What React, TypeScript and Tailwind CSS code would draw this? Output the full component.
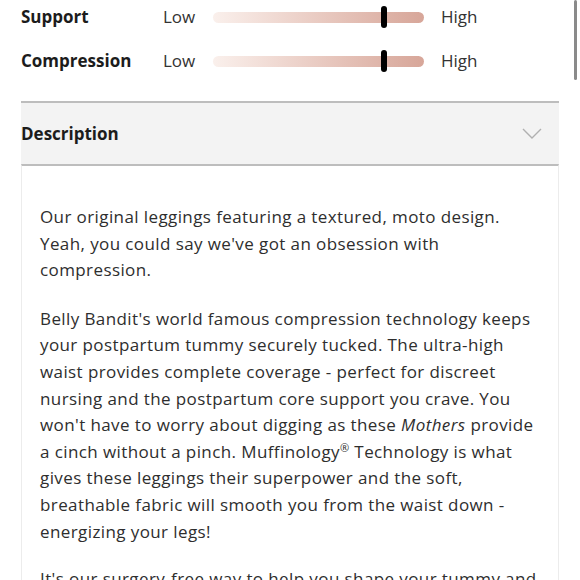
import React from 'react';

type RatingRowProps = {
  label: string;
  value: number;
};

function RatingRow({ label, value }: RatingRowProps) {
  return (
    <div className="flex h-[44px] items-center">
      <span className="w-[142px] text-[17px] font-bold text-[#1c1c1c]">{label}</span>
      <span className="w-[50px] text-[17px] text-[#333]">Low</span>
      <div className="relative h-[11px] w-[211px] rounded-full bg-gradient-to-r from-[#faf0ec] to-[#d7a699]">
        <div
          className="absolute top-1/2 h-[22px] w-[6px] -translate-x-1/2 -translate-y-1/2 rounded-full bg-black"
          style={{ left: `${value}%` }}
        />
      </div>
      <span className="ml-[17px] text-[17px] text-[#333]">High</span>
    </div>
  );
}

export default function App() {
  return (
    <div
      className="relative h-[580px] w-[580px] overflow-hidden bg-white"
      style={{ fontFamily: '"Open Sans", "Liberation Sans", sans-serif' }}
    >
      <div className="absolute right-[3px] top-0 h-[80px] w-[3px] rounded-full bg-[#8a8a8a]" />
      <div className="px-[21px]">
        <div className="-mt-[5px]">
          <RatingRow label="Support" value={81} />
          <RatingRow label="Compression" value={81} />
        </div>

        <div className="mt-[18px] w-[538px] border-t-2 border-[#bdbdbd]">
          <div className="flex h-[61px] items-center justify-between bg-[#f3f3f3] pr-[17px]">
            <span className="text-[17px] font-bold text-[#1c1c1c]">Description</span>
            <svg width="20" height="12" viewBox="0 0 20 12" fill="none">
              <path d="M1 1l9 9 9-9" stroke="#b0b0b0" strokeWidth="1.4" />
            </svg>
          </div>
          <div className="whitespace-nowrap border-x border-t-2 border-[#ececec] border-t-[#bdbdbd] px-[18px] pt-[38px] text-[17px] leading-[26.6px] tracking-[0.4px] text-[#2e2e2e]">
            <p>
              Our original leggings featuring a textured, moto design.
              <br />
              Yeah, you could say we've got an obsession with
              <br />
              compression.
            </p>
            <p className="mt-[22px]">
              Belly Bandit's world famous compression technology keeps
              <br />
              your postpartum tummy securely tucked. The ultra-high
              <br />
              waist provides complete coverage - perfect for discreet
              <br />
              nursing and the postpartum core support you crave. You
              <br />
              won't have to worry about digging as these <em>Mothers</em> provide
              <br />
              a cinch without a pinch. Muffinology<sup className="text-[11px]">®</sup> Technology is what
              <br />
              gives these leggings their superpower and the soft,
              <br />
              breathable fabric will smooth you from the waist down -
              <br />
              energizing your legs!
            </p>
            <p className="mt-[21px]">
              It's our surgery-free way to help you shape your tummy and
              <br />
              more.
            </p>
          </div>
        </div>
      </div>
    </div>
  );
}
